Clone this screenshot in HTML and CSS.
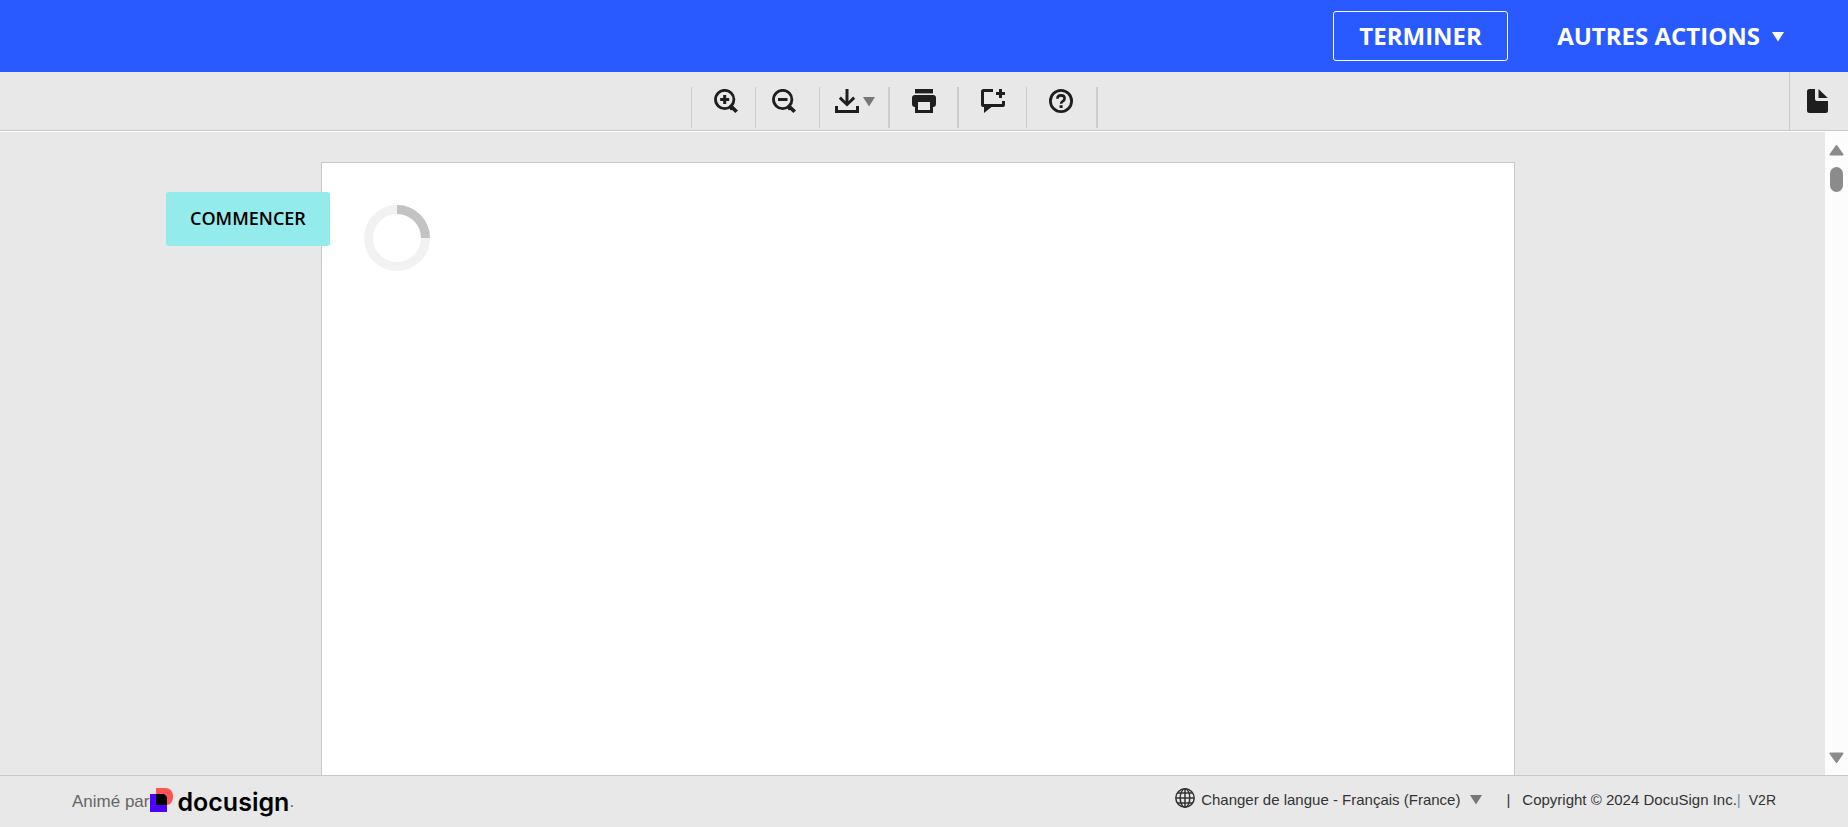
FILE: index.html
```html
<!DOCTYPE html>
<html lang="fr">
<head>
<meta charset="utf-8">
<meta name="viewport" content="width=device-width, initial-scale=1">
<title>Docusign</title>
<link rel="stylesheet" href="styles.css">
</head>
<body class="app">
<header class="topbar">
  <button class="finish" type="button">TERMINER</button>
  <button class="more" type="button">AUTRES ACTIONS
    <svg class="more-caret" viewBox="0 0 12 10" aria-hidden="true"><path d="M0 0h12L6 9.5z"/></svg>
  </button>
</header>

<div class="toolbar">
  <div class="tools">
    <button class="tool tool-wide" type="button" aria-label="Zoom avant">
      <svg class="icon" viewBox="0 0 24 24"><circle cx="10.7" cy="10.5" r="9.2" fill="none" stroke="currentColor" stroke-width="2.8"/><path d="M9.2 6h3v3h3v3h-3v3h-3v-3h-3V9h3z"/><path d="M17.2 15L24 21.6 21.4 24l-3.2-3-1.8.3-1.4-4.3z"/></svg>
    </button>
    <button class="tool" type="button" aria-label="Zoom arrière">
      <svg class="icon" viewBox="0 0 24 24"><circle cx="10.7" cy="10.5" r="9.2" fill="none" stroke="currentColor" stroke-width="2.8"/><path d="M6 9h9.5v3H6z"/><path d="M17.2 15L24 21.6 21.4 24l-3.2-3-1.8.3-1.4-4.3z"/></svg>
    </button>
    <button class="tool tool-download" type="button" aria-label="Télécharger">
      <svg class="icon" viewBox="0 0 24 24"><path d="M0 17h3v4h18v-4h3v7H0z"/><path d="M10.5 0h3v12.2l4.6-4.6 2.1 2.1L12 17.6 3.8 9.7l2.1-2.1 4.6 4.6z"/></svg>
      <svg class="caret" viewBox="0 0 12 10"><path d="M0 0h12L6 9.5z"/></svg>
    </button>
    <button class="tool tool-wide tool-thick" type="button" aria-label="Imprimer">
      <svg class="icon" viewBox="0 0 24 24"><path d="M3 0h18v4.4H3z"/><path fill-rule="evenodd" d="M3 6h18a3 3 0 0 1 3 3v6a3 3 0 0 1-3 3v6H3v-6a3 3 0 0 1-3-3V9a3 3 0 0 1 3-3zm3 7v8h12v-8z"/></svg>
    </button>
    <button class="tool tool-wide tool-thick" type="button" aria-label="Commenter">
      <svg class="icon" viewBox="0 0 24 24"><path d="M2.5 0H12v3H3v12h18v-3h3v4a2 2 0 0 1-2 2H10.5L3 24v-6H2a2 2 0 0 1-2-2V2.500A2.500 2.500 0 0 1 2.500 0z"/><path d="M18 0h3v3h3v3h-3v3h-3V6h-3V3h3z"/></svg>
    </button>
    <button class="tool tool-wide" type="button" aria-label="Aide">
      <svg class="icon" viewBox="0 0 24 24"><circle cx="12" cy="12" r="10.6" fill="none" stroke="currentColor" stroke-width="2.8"/><path d="M8.4 9.8c0-2.3 1.5-3.4 3.600-3.400s3.600 1.100 3.600 3-1.200 2.500-2.200 3.100c-.9.600-1.300 1-1.300 2.300" fill="none" stroke="currentColor" stroke-width="2.600"/><path d="M10.600 16.200h3V19h-3z"/></svg>
    </button>
  </div>
  <button class="pages" type="button" aria-label="Pages du document">
    <svg class="icon" viewBox="0 0 24 24"><path d="M3.500 0H9v10a2 2 0 0 0 2 2h11v9.500a2.500 2.500 0 0 1-2.500 2.500h-16A2.500 2.500 0 0 1 1 21.500v-19A2.500 2.500 0 0 1 3.500 0z"/><path d="M12.500 0l9.300 9h-9.300z"/></svg>
  </button>
</div>

<main class="workspace">
  <div class="canvas">
    <section class="sheet" aria-label="Document">
      <button class="start" type="button">COMMENCER</button>
      <svg class="spinner" viewBox="0 0 66 66" role="img" aria-label="Chargement"><circle cx="33" cy="33" r="28.500" fill="none" stroke="#f2f2f2" stroke-width="9"/><path d="M33 4.500A28.500 28.500 0 0 1 61.500 33" fill="none" stroke="#c3c3c3" stroke-width="9"/></svg>
    </section>
  </div>
  <div class="scrollbar" aria-hidden="true">
    <svg class="scroll-arrow" viewBox="0 0 15 12"><path d="M7.500 2L13.500 10.500h-12z"/></svg>
    <div class="track"><div class="thumb"></div></div>
    <svg class="scroll-arrow" viewBox="0 0 15 12"><path d="M7.500 10L13.500 1.500h-12z"/></svg>
  </div>
</main>

<footer class="footer">
  <div class="powered">
    <span>Animé par</span>
    <svg class="mark" viewBox="0 0 23 24" aria-hidden="true"><path d="M0 6h17v18H0z" fill="#4c00ff"/><path d="M6 0h9c5 0 8 3 8 8.500S20 17 17 17H6z" fill="#ff5252"/><path d="M6 6h8l3 3v8H6z" fill="#000"/></svg>
    <span class="wordmark">docusign</span><span class="dot">.</span>
  </div>
  <div class="legal">
    <button class="language" type="button">
      <svg class="globe" viewBox="0 0 20 20" aria-hidden="true"><circle cx="10" cy="10" r="9.200"/><ellipse cx="10" cy="10" rx="4.800" ry="9.200"/><path d="M10 1v18M1 10h18M2.500 5h15M2.500 15h15"/></svg>
      <span>Changer de langue - Français (France)</span>
      <svg class="caret" viewBox="0 0 12 10" aria-hidden="true"><path d="M0 0h12L6 9.500z"/></svg>
    </button>
    <span class="divider">|</span>
    <span>Copyright © 2024 DocuSign Inc.</span><span class="divider-blue">|</span>
    <span class="version">V2R</span>
  </div>
</footer>
</body>
</html>
```
FILE: styles.css
```css
* { box-sizing: border-box; }
.app {
  margin: 0;
  height: 100vh;
  display: flex;
  flex-direction: column;
  background: #e8e8e8;
  color: #333;
  font-family: "Liberation Sans", Arial, sans-serif;
  overflow: hidden;
}
button {
  margin: 0;
  padding: 0;
  border: 0;
  background: none;
  color: inherit;
  font: inherit;
  cursor: pointer;
}
svg { display: block; flex: none; fill: currentColor; }

.topbar {
  flex: none;
  height: 72px;
  padding-right: 64px;
  display: flex;
  align-items: center;
  justify-content: flex-end;
  gap: 49px;
  background: #285aff;
  color: #fff;
  font: 700 24px/32px "Open Sans", sans-serif;
}
.finish {
  width: 175px;
  height: 50px;
  border: 1px solid #fff;
  border-radius: 3px;
}
.more {
  display: flex;
  align-items: center;
  gap: 12px;
}
.more-caret { width: 12px; height: 10px; margin-top: 2px; }

.toolbar {
  flex: none;
  height: 60px;
  display: flex;
  border-bottom: 1px solid #fff;
  box-shadow: inset 0 -1px #c8c8c8;
  color: #1e1e1e;
}
.tools {
  flex: 1;
  display: flex;
  justify-content: center;
  padding: 15px 0 3px;
}
.tool {
  width: 64px;
  display: flex;
  align-items: flex-start;
  padding: 2px 0 0 16px;
  border-left: 1px solid #ccc;
}
.tool-wide { padding-left: 22px; }
.tool-download { width: 69px; gap: 4px; padding-left: 15px; }
.tool-thick { width: 69px; border-left-width: 2px; }
.tool:last-child { width: 72px; border-right: 2px solid #ccc; }
.icon { width: 24px; height: 24px; }
.caret { width: 12px; height: 10px; color: #777; }
.tool .caret { margin-top: 8px; }
.pages {
  width: 59px;
  padding: 17px 16px;
  border-left: 1px solid #c8c8c8;
  display: flex;
}

.workspace {
  flex: 1;
  min-height: 0;
  display: flex;
}
.canvas {
  flex: 1;
  display: flex;
  padding: 30px 310px 0 321px;
}
.sheet {
  position: relative;
  flex: 1;
  padding: 42px;
  border: 1px solid #c8c8c8;
  border-bottom: 0;
  background: #fff;
}
.start {
  position: absolute;
  left: -156px;
  top: 29px;
  padding: 14px 24px 16px;
  border-radius: 3px;
  background: #94ebeb;
  color: #000;
  font: 600 18px/24px "Open Sans", sans-serif;
}
.spinner { width: 66px; height: 66px; }

.scrollbar {
  width: 23px;
  padding: 12px 0 11px;
  display: flex;
  flex-direction: column;
  align-items: center;
  gap: 11px;
  background: #fcfcfc;
  color: #8b8b8b;
}
.scroll-arrow {
  width: 15px;
  height: 12px;
  stroke: currentColor;
  stroke-width: 2;
  stroke-linejoin: round;
}
.track { flex: 1; }
.thumb { width: 13px; height: 25px; border-radius: 7px; background: #8b8b8b; }

.footer {
  flex: none;
  height: 52px;
  padding: 0 72px 2px;
  display: flex;
  align-items: center;
  justify-content: space-between;
  border-top: 1px solid #c8c8c8;
  font-size: 15px;
  line-height: 24px;
}
.powered {
  display: flex;
  align-items: center;
  padding-top: 2px;
  color: #666;
  font-size: 17px;
}
.mark { width: 23px; height: 24px; margin: 0 4px 4px 1px; }
.wordmark {
  color: #000;
  font: 600 25px/32px Inter, sans-serif;
}
.legal { display: flex; align-items: center; padding-bottom: 2px; }
.language { display: flex; align-items: center; }
.globe {
  width: 20px;
  height: 20px;
  margin: 0 6px 4px 0;
  fill: none;
  stroke: currentColor;
  stroke-width: 1.5;
}
.language .caret { margin-left: 10px; }
.divider { margin: 0 12px 0 24px; }
.divider-blue { color: #6a94b5; }
.version { margin-left: 8px; font-size: 14px; }
```
